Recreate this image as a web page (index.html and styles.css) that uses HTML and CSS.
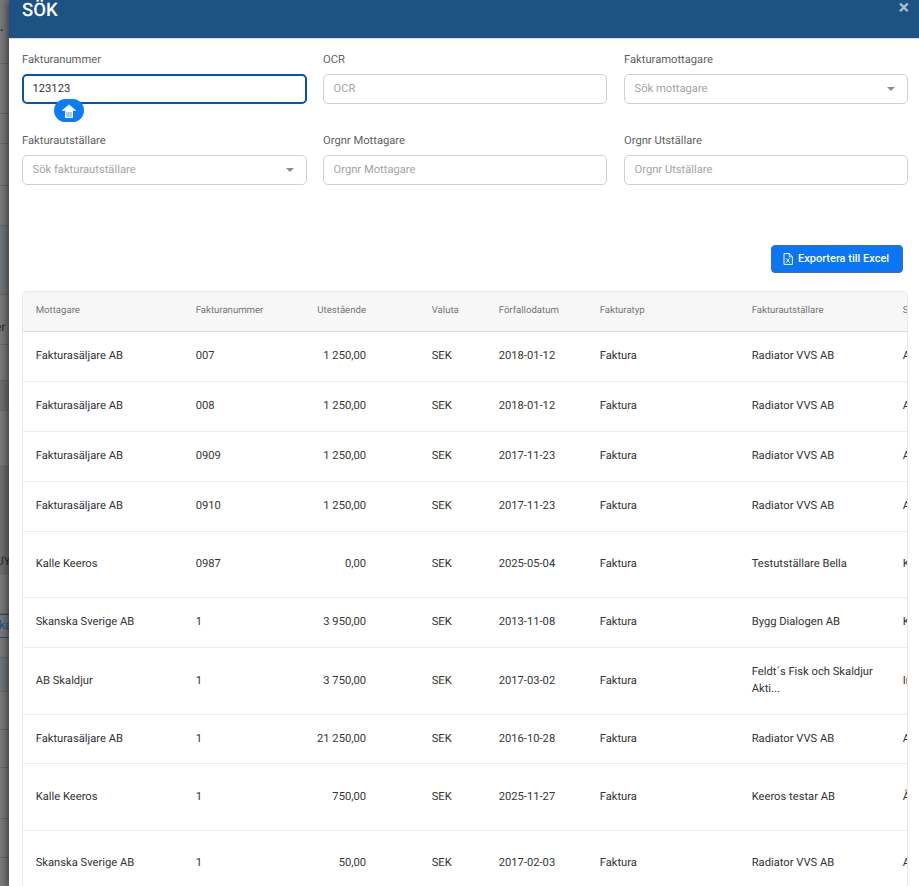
FILE: index.html
```html
<!DOCTYPE html>
<html lang="sv">
<head>
<meta charset="utf-8">
<title>Sök</title>
<link rel="stylesheet" href="styles.css">
</head>
<body>
<div class="page">
  <aside class="backdrop">
    <div class="band h64"><span class="dot">.</span></div>
    <div class="band h50"></div>
    <div class="band h30"></div>
    <div class="band h42"></div>
    <div class="band h40"></div>
    <div class="band h69 bluish"></div>
    <div class="band h50"><span class="peek">er</span></div>
    <div class="band h36"></div>
    <div class="band h30 dark"></div>
    <div class="band h56"></div>
    <div class="band h107 dark"><span class="peek peek-low">UY</span></div>
    <div class="band h40"></div>
    <div class="band h24 tab"><span class="peek peek-blue">ka</span></div>
    <div class="band h20"></div>
    <div class="band h34 bluish"></div>
    <div class="band h38"></div>
    <div class="band h38"></div>
    <div class="band h51"></div>
    <div class="band h39"></div>
    <div class="band h40"></div>
  </aside>
  <main class="modal">
    <header class="modal-head">
      <h1 class="modal-title">SÖK</h1>
      <span class="modal-close">×</span>
    </header>
    <section class="modal-body">
      <form class="fields">
        <div class="field">
          <label class="field-label">Fakturanummer</label>
          <div class="input input-focus">123123</div>
          <span class="helper">
            <svg class="helper-icon" width="16" height="14" viewBox="0 0 16 14"><path d="M8 .5 15.5 6.8H12V7.5H4V6.8H.5z" fill="#fff"/><path d="M4.5 7.5h7v6h-7z" fill="#a9cdfb" stroke="#fff" stroke-width="1"/></svg>
          </span>
        </div>
        <div class="field">
          <label class="field-label">OCR</label>
          <div class="input placeholder">OCR</div>
        </div>
        <div class="field field-last">
          <label class="field-label">Fakturamottagare</label>
          <div class="input placeholder select">Sök mottagare<span class="caret"></span></div>
        </div>
        <div class="field">
          <label class="field-label">Fakturautställare</label>
          <div class="input placeholder select">Sök fakturautställare<span class="caret"></span></div>
        </div>
        <div class="field">
          <label class="field-label">Orgnr Mottagare</label>
          <div class="input placeholder">Orgnr Mottagare</div>
        </div>
        <div class="field field-last">
          <label class="field-label">Orgnr Utställare</label>
          <div class="input placeholder">Orgnr Utställare</div>
        </div>
      </form>
      <div class="actions">
        <button class="export" type="button">
          <svg width="10" height="12" viewBox="0 0 10 12"><path d="M1 .6h5.4L9.4 3.6v7.8H1z" fill="none" stroke="#fff" stroke-width="1"/><path d="M6.2.8v3h3" fill="none" stroke="#fff" stroke-width=".9"/><path d="M3.2 5.4 6.6 9.6M6.6 5.4 3.2 9.6" stroke="#fff" stroke-width="1"/></svg>
          Exportera till Excel
        </button>
      </div>
      <div class="table-wrap">
        <table class="grid">
          <colgroup>
            <col class="c1"><col class="c2"><col class="c3"><col class="c4"><col class="c5"><col class="c6"><col class="c7"><col class="c8">
          </colgroup>
          <thead>
            <tr class="head-row"><th>Mottagare</th><th>Fakturanummer</th><th class="num">Utestående</th><th>Valuta</th><th>Förfallodatum</th><th>Fakturatyp</th><th>Fakturautställare</th><th>Status</th></tr>
          </thead>
          <tbody>
            <tr class="r50"><td>Fakturasäljare AB</td><td>007</td><td class="num">1 250,00</td><td>SEK</td><td>2018-01-12</td><td>Faktura</td><td>Radiator VVS AB</td><td>Avslutad</td></tr>
            <tr class="r50"><td>Fakturasäljare AB</td><td>008</td><td class="num">1 250,00</td><td>SEK</td><td>2018-01-12</td><td>Faktura</td><td>Radiator VVS AB</td><td>Avslutad</td></tr>
            <tr class="r50"><td>Fakturasäljare AB</td><td>0909</td><td class="num">1 250,00</td><td>SEK</td><td>2017-11-23</td><td>Faktura</td><td>Radiator VVS AB</td><td>Avslutad</td></tr>
            <tr class="r50"><td>Fakturasäljare AB</td><td>0910</td><td class="num">1 250,00</td><td>SEK</td><td>2017-11-23</td><td>Faktura</td><td>Radiator VVS AB</td><td>Avslutad</td></tr>
            <tr class="r66"><td>Kalle Keeros</td><td>0987</td><td class="num">0,00</td><td>SEK</td><td>2025-05-04</td><td>Faktura</td><td>Testutställare Bella</td><td>Kredit</td></tr>
            <tr class="r50"><td>Skanska Sverige AB</td><td>1</td><td class="num">3 950,00</td><td>SEK</td><td>2013-11-08</td><td>Faktura</td><td>Bygg Dialogen AB</td><td>Kredit</td></tr>
            <tr class="r67"><td>AB Skaldjur</td><td>1</td><td class="num">3 750,00</td><td>SEK</td><td>2017-03-02</td><td>Faktura</td><td>Feldt´s Fisk och Skaldjur Akti...</td><td>Inkasso</td></tr>
            <tr class="r49"><td>Fakturasäljare AB</td><td>1</td><td class="num">21 250,00</td><td>SEK</td><td>2016-10-28</td><td>Faktura</td><td>Radiator VVS AB</td><td>Avslutad</td></tr>
            <tr class="r67"><td>Kalle Keeros</td><td>1</td><td class="num">750,00</td><td>SEK</td><td>2025-11-27</td><td>Faktura</td><td>Keeros testar AB</td><td>Återbetald</td></tr>
            <tr class="r66"><td>Skanska Sverige AB</td><td>1</td><td class="num">50,00</td><td>SEK</td><td>2017-02-03</td><td>Faktura</td><td>Radiator VVS AB</td><td>Avslutad</td></tr>
          </tbody>
        </table>
      </div>
    </section>
  </main>
</div>
</body>
</html>
```
FILE: styles.css
```css
* { box-sizing: border-box; }
html, body { margin: 0; height: 100%; overflow: hidden; }
body { font-family: Roboto, "Liberation Sans", sans-serif; background: #fff; text-rendering: geometricPrecision; }

.page { display: flex; height: 886px; width: 919px; overflow: hidden; }

/* dimmed page behind the dialog */
.backdrop { flex: 0 0 9px; width: 9px; display: flex; flex-direction: column; background: #7b7b7b; overflow: hidden; }
.band { flex: none; border-bottom: 1px solid #686868; background: #7b7b7b; overflow: hidden; font-size: 12px; line-height: 14px; color: #2c2c2c; white-space: nowrap; display: flex; align-items: center; }
.bluish { background: #71767c; }
.dark { background: #6f7072; }
.tab { border-top: 1px solid #1d4f8c; border-bottom: 1px solid #1d4f8c; }
.h20 { height: 20px; } .h24 { height: 24px; } .h30 { height: 30px; } .h34 { height: 34px; }
.h36 { height: 36px; } .h38 { height: 38px; } .h39 { height: 39px; } .h40 { height: 40px; }
.h42 { height: 42px; } .h50 { height: 50px; } .h51 { height: 51px; } .h56 { height: 56px; }
.h64 { height: 64px; } .h69 { height: 69px; } .h107 { height: 107px; }
.dot { color: #222; font-weight: 700; margin-top: -10px; }
.peek { display: block; margin-left: -5px; margin-top: 15px; }
.peek-low { margin-top: 81px; margin-left: -4px; }
.peek-blue { color: #1d4f8c; margin-top: -2px; margin-left: -1px; }

/* dialog */
.modal { flex: 1; min-width: 0; background: #fff; position: relative; box-shadow: -3px 0 7px rgba(0,0,0,.45); }
.modal-head { height: 39px; background: #1d5382; border-bottom: 1px solid #d4dde6; padding: 0 13px; display: flex; justify-content: space-between; align-items: flex-start; }
.modal-title { margin: 0; font-size: 18.5px; font-weight: 500; line-height: 20px; color: #fff; }
.modal-close { color: #a9bccd; font-size: 20px; font-weight: 700; line-height: 15px; margin-right: -3px; }

.modal-body { padding: 11px 11px 0 13px; }

.fields { display: grid; grid-template-columns: 285px 284px 285px; column-gap: 16px; row-gap: 27px; }
.field { position: relative; }
.field-last { margin-left: 1px; }
.field-label { display: block; font-size: 11.2px; line-height: 18px; color: #5f5f5f; padding-top: 1px; height: 24px; }
.input { position: relative; height: 30px; border: 1px solid #d0d0d0; border-radius: 5px; padding: 0 9.5px; font-size: 11.2px; line-height: 28px; color: #333; background: #fff; }
.input-focus { border: 2px solid #0a52b8; line-height: 26px; padding: 0 8.5px; }
.placeholder { color: #a4a4a4; }
.select { padding-right: 30px; }
.caret { position: absolute; right: 12px; top: 12px; width: 0; height: 0; border-left: 4px solid transparent; border-right: 4px solid transparent; border-top: 4px solid #8a8a8a; }

.helper { position: absolute; left: 32px; top: 49px; width: 30px; height: 23px; border-radius: 12px; background: #0a7cf5; display: flex; align-items: center; justify-content: center; }

.actions { display: flex; justify-content: flex-end; padding: 60px 5px 18px 0; }
.export { height: 28px; width: 132px; border: 1px solid #3f6ea8; border-radius: 4px; background: #0a76f6; color: #fff; font-family: inherit; font-size: 11px; font-weight: 500; display: flex; align-items: center; gap: 5px; padding: 0 0 1px 11px; white-space: nowrap; }

.table-wrap { width: 886px; border: 1px solid #e9e9e9; border-bottom: 0; border-radius: 5px 5px 0 0; overflow: hidden; }
.grid { width: 1000px; table-layout: fixed; border-collapse: separate; border-spacing: 0; font-size: 11.2px; color: #333; }
.c1 { width: 160px; } .c2 { width: 100px; } .c3 { width: 136px; } .c4 { width: 67px; }
.c5 { width: 101px; } .c6 { width: 152px; } .c7 { width: 151px; } .c8 { width: 133px; }
.head-row { height: 40px; background: #f7f7f7; }
.grid th { padding: 0 13px 2px 12.7px; font-size: 9.6px; font-weight: 400; color: #757575; text-align: left; border-bottom: 1px solid #dcdcdc; white-space: nowrap; overflow: hidden; }
.grid td { padding: 0 13px 2px 12.7px; line-height: 17px; border-bottom: 1px solid #ececec; overflow: hidden; }
.grid .num { text-align: right; padding-right: 53px; }
.r49 { height: 49px; } .r50 { height: 50px; } .r66 { height: 66px; } .r67 { height: 67px; }
```
